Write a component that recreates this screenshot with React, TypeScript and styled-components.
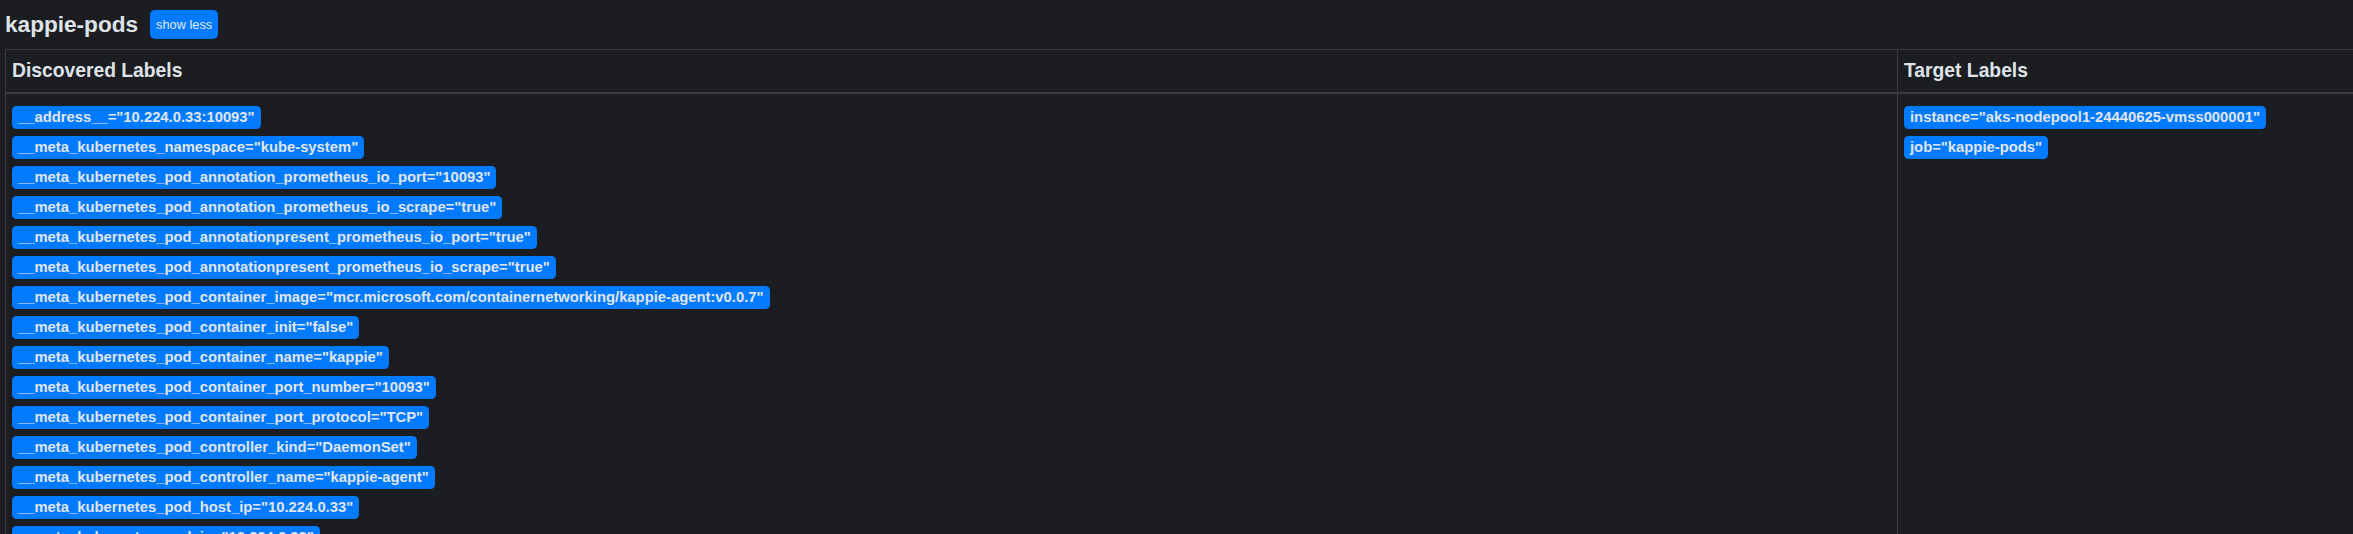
import React from 'react'
import styled, { createGlobalStyle } from 'styled-components'

const GlobalStyle = createGlobalStyle`
  html, body {
    margin: 0;
    padding: 0;
    background: #1b1d21;
    overflow: hidden;
  }
  body {
    font-family: "Liberation Sans", Arial, sans-serif;
    color: #dfe3e8;
  }
`

const Page = styled.div`
  padding: 0 0 0 5px;
  width: 2600px;
`

const TitleRow = styled.div`
  display: flex;
  align-items: center;
  height: 49px;
  gap: 12px;
`

const Title = styled.h3`
  margin: 0;
  font-size: 22.6px;
  font-weight: 700;
  line-height: 1.2;
  color: #dfe3e8;
`

const SmallButton = styled.button`
  background: #007bff;
  color: #e4e8ee;
  border: none;
  border-radius: 5px;
  font-family: "Liberation Sans", Arial, sans-serif;
  font-size: 12.8px;
  line-height: 19px;
  padding: 5px 6px;
  cursor: pointer;
`

const Table = styled.div`
  display: grid;
  grid-template-columns: 1892px 1fr;
  border-top: 1px solid #3a3c41;
  border-left: 1px solid #3a3c41;
`

const HeadCell = styled.div`
  padding: 6px;
  font-size: 19.3px;
  font-weight: 700;
  line-height: 30px;
  border-right: 1px solid #3a3c41;
  border-bottom: 2px solid #3a3c41;
`

const BodyCell = styled.div`
  padding: 6px;
  border-right: 1px solid #3a3c41;
  border-bottom: 1px solid #3a3c41;
`

const LabelRow = styled.div`
  height: 30px;
`

const Badge = styled.span`
  display: inline-block;
  margin-top: 6px;
  height: 22.5px;
  box-sizing: border-box;
  padding: 4.3px 6px 0;
  background: #007bff;
  color: #e0e5eb;
  border-radius: 4.5px;
  font-size: 14.8px;
  font-weight: 700;
  line-height: 1;
  white-space: nowrap;
`

const discovered: [string, string][] = [
  ['__address__', '10.224.0.33:10093'],
  ['__meta_kubernetes_namespace', 'kube-system'],
  ['__meta_kubernetes_pod_annotation_prometheus_io_port', '10093'],
  ['__meta_kubernetes_pod_annotation_prometheus_io_scrape', 'true'],
  ['__meta_kubernetes_pod_annotationpresent_prometheus_io_port', 'true'],
  ['__meta_kubernetes_pod_annotationpresent_prometheus_io_scrape', 'true'],
  ['__meta_kubernetes_pod_container_image', 'mcr.microsoft.com/containernetworking/kappie-agent:v0.0.7'],
  ['__meta_kubernetes_pod_container_init', 'false'],
  ['__meta_kubernetes_pod_container_name', 'kappie'],
  ['__meta_kubernetes_pod_container_port_number', '10093'],
  ['__meta_kubernetes_pod_container_port_protocol', 'TCP'],
  ['__meta_kubernetes_pod_controller_kind', 'DaemonSet'],
  ['__meta_kubernetes_pod_controller_name', 'kappie-agent'],
  ['__meta_kubernetes_pod_host_ip', '10.224.0.33'],
  ['__meta_kubernetes_pod_ip', '10.224.0.33'],
]

const target: [string, string][] = [
  ['instance', 'aks-nodepool1-24440625-vmss000001'],
  ['job', 'kappie-pods'],
]

function LabelList({ labels }: { labels: [string, string][] }) {
  return (
    <>
      {labels.map(([k, v]) => (
        <LabelRow key={k}>
          <Badge>{`${k}="${v}"`}</Badge>
        </LabelRow>
      ))}
    </>
  )
}

export default function App() {
  return (
    <Page>
      <GlobalStyle />
      <TitleRow>
        <Title>kappie-pods</Title>
        <SmallButton>show less</SmallButton>
      </TitleRow>
      <Table>
        <HeadCell>Discovered Labels</HeadCell>
        <HeadCell>Target Labels</HeadCell>
        <BodyCell>
          <LabelList labels={discovered} />
        </BodyCell>
        <BodyCell>
          <LabelList labels={target} />
        </BodyCell>
      </Table>
    </Page>
  )
}
